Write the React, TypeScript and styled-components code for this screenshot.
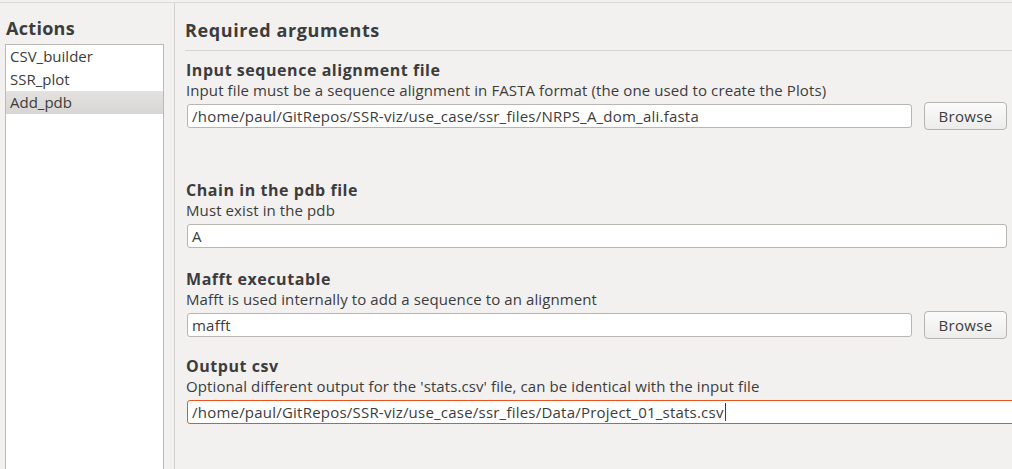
import React from "react";
import styled, { createGlobalStyle } from "styled-components";

const GlobalStyle = createGlobalStyle`
  html, body {
    margin: 0;
    padding: 0;
    background: #f2f1f0;
  }
  body {
    font-family: "Open Sans", "DejaVu Sans", sans-serif;
    color: #3c3c3c;
  }
`;

const Window = styled.div`
  width: 1012px;
  height: 469px;
  overflow: hidden;
  box-sizing: border-box;
  margin-top: 2px;
  border-top: 1px solid #dcdad7;
  display: grid;
  grid-template-columns: 175px 1fr;
  background: #f2f1f0;
`;

const Sidebar = styled.aside`
  border-right: 1px solid #d3d1ce;
  padding: 13px 10px 0 5px;
  display: flex;
  flex-direction: column;
`;

const PanelTitle = styled.h2`
  margin: 0 0 0 1px;
  font-size: 18px;
  font-weight: 700;
  line-height: 24px;
  color: #3c3c3c;
  letter-spacing: 0.3px;
`;

const ActionList = styled.ul`
  list-style: none;
  margin: 4px 0 -20px 0;
  padding: 0;
  background: #ffffff;
  border: 1px solid #bdbab6;
  flex: 1;
`;

const ActionItem = styled.li<{ $selected?: boolean }>`
  height: 23px;
  line-height: 23px;
  padding-left: 4px;
  font-size: 15px;
  color: #3c3c3c;
  background: ${(p) =>
    p.$selected ? "linear-gradient(#e3e2e0, #d8d6d3)" : "transparent"};
`;

const Main = styled.main`
  padding: 15px 0 0 10px;
  display: flex;
  flex-direction: column;
`;

const GroupTitle = styled.h1`
  margin: 0;
  font-size: 18px;
  font-weight: 700;
  line-height: 24px;
  color: #3c3c3c;
  padding-bottom: 8px;
  border-bottom: 1px solid #d8d6d3;
  letter-spacing: 0.6px;
`;

const Form = styled.div`
  display: flex;
  flex-direction: column;
  padding-left: 1px;
`;

const Section = styled.section<{ $top: number }>`
  display: flex;
  flex-direction: column;
  margin-top: ${(p) => p.$top}px;
`;

const FieldTitle = styled.div`
  font-size: 16px;
  font-weight: 700;
  line-height: 20px;
  color: #3c3c3c;
  letter-spacing: 0.55px;
`;

const FieldDesc = styled.div`
  font-size: 15px;
  line-height: 20px;
  color: #3c3c3c;
  letter-spacing: 0.1px;
`;

const FieldRow = styled.div`
  display: flex;
  align-items: center;
  gap: 12px;
  min-height: 28px;
  margin-top: 2px;
  padding: 0 5px 0 1px;
`;

const Field = styled.div<{ $focused?: boolean; $overflow?: boolean }>`
  flex: 1;
  box-sizing: border-box;
  height: 24px;
  padding: 0 4px;
  background: #ffffff;
  border: 1px solid ${(p) => (p.$focused ? "#e9541f" : "#b9b6b1")};
  border-radius: 3px;
  font-size: 15px;
  letter-spacing: 0.22px;
  color: #3c3c3c;
  white-space: nowrap;
  overflow: hidden;
  margin-right: ${(p) => (p.$overflow ? "-20px" : "0")};
  display: flex;
  align-items: center;
`;

const Caret = styled.span`
  display: inline-block;
  width: 1px;
  height: 18px;
  background: #3c3c3c;
  margin-left: 1px;
`;

const BrowseButton = styled.button`
  width: 83px;
  height: 28px;
  box-sizing: border-box;
  border: 1px solid #b7b4af;
  border-radius: 4px;
  background: linear-gradient(#fbfbfb, #ececeb);
  font-family: "Open Sans", "DejaVu Sans", sans-serif;
  font-size: 15px;
  letter-spacing: 0.3px;
  color: #3c3c3c;
  padding: 0;
`;

type Arg = {
  title: string;
  desc: string;
  value: string;
  browse?: boolean;
  focused?: boolean;
  top: number;
};

const args: Arg[] = [
  {
    title: "Input sequence alignment file",
    desc: "Input file must be a sequence alignment in FASTA format (the one used to create the Plots)",
    value: "/home/paul/GitRepos/SSR-viz/use_case/ssr_files/NRPS_A_dom_ali.fasta",
    browse: true,
    top: 9,
  },
  {
    title: "Chain in the pdb file",
    desc: "Must exist in the pdb",
    value: "A",
    top: 50,
  },
  {
    title: "Mafft executable",
    desc: "Mafft is used internally to add a sequence to an alignment",
    value: "mafft",
    browse: true,
    top: 19,
  },
  {
    title: "Output csv",
    desc: "Optional different output for the 'stats.csv' file, can be identical with the input file",
    value: "/home/paul/GitRepos/SSR-viz/use_case/ssr_files/Data/Project_01_stats.csv",
    focused: true,
    top: 17,
  },
];

export default function App() {
  return (
    <>
      <GlobalStyle />
      <Window>
        <Sidebar>
          <PanelTitle>Actions</PanelTitle>
          <ActionList>
            <ActionItem>CSV_builder</ActionItem>
            <ActionItem>SSR_plot</ActionItem>
            <ActionItem $selected>Add_pdb</ActionItem>
          </ActionList>
        </Sidebar>
        <Main>
          <GroupTitle>Required arguments</GroupTitle>
          <Form>
            {args.map((a) => (
              <Section key={a.title} $top={a.top}>
                <FieldTitle>{a.title}</FieldTitle>
                <FieldDesc>{a.desc}</FieldDesc>
                <FieldRow>
                  <Field $focused={a.focused} $overflow={a.focused}>
                    {a.value}
                    {a.focused && <Caret />}
                  </Field>
                  {a.browse && <BrowseButton>Browse</BrowseButton>}
                </FieldRow>
              </Section>
            ))}
          </Form>
        </Main>
      </Window>
    </>
  );
}
